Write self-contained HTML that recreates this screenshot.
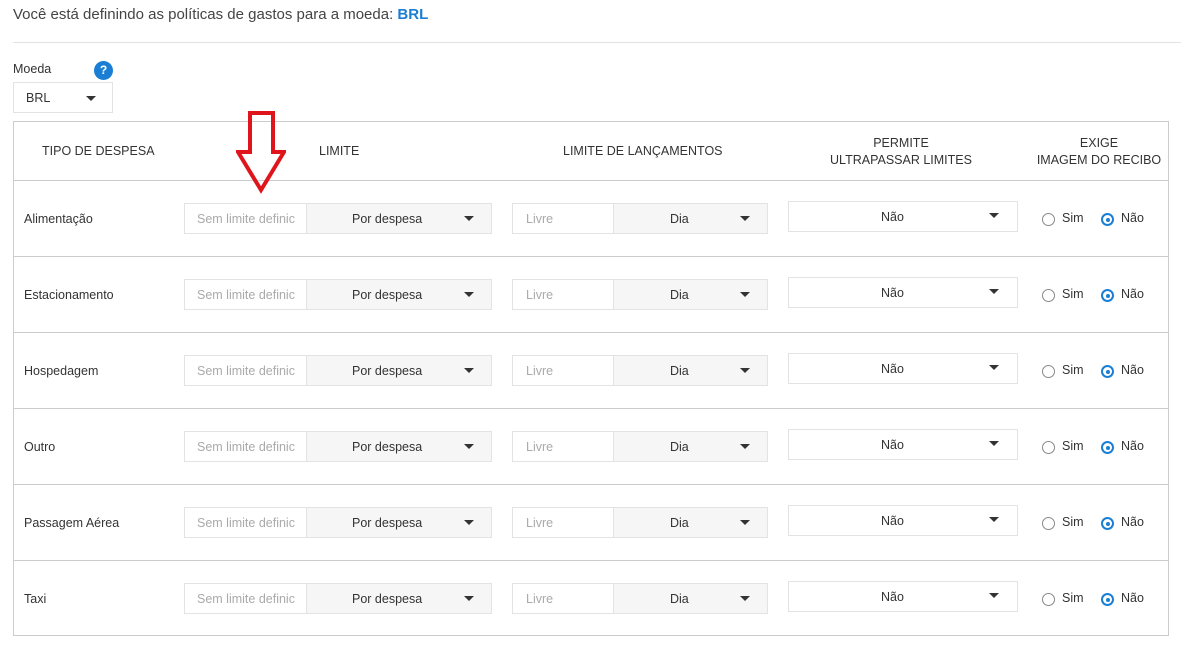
<!DOCTYPE html><html><head><style>
body{margin:0;width:1181px;height:649px;background:#fff;font-family:"Liberation Sans",sans-serif;position:relative;overflow:hidden;color:#333}
.a{position:absolute}
.t{font-size:12.5px;color:#333}
.box{position:absolute;box-sizing:border-box;border:1px solid #e3e3e3;background:#fff;font-size:12.5px}
.g{background:#f6f6f6}
.car{position:absolute;width:0;height:0;border-left:5px solid transparent;border-right:5px solid transparent;border-top:5px solid #333}
.hl{position:absolute;left:13px;width:1156px;height:1px;background:#ccc}
.rad{position:absolute;width:13px;height:13px;border-radius:50%;box-sizing:border-box}
</style></head><body>
<div class="a" style="left:13px;top:6px;font-size:15px;color:#444">Você está definindo as políticas de gastos para a moeda: <span style="color:#1a7fd4;font-weight:bold">BRL</span></div>
<div class="a" style="left:13px;top:42px;width:1168px;height:1px;background:#e2e2e2"></div>
<div class="a t" style="left:13px;top:62px">Moeda</div>
<div class="a" style="left:94px;top:61px;width:19px;height:19px;border-radius:50%;background:#1a7fd4;color:#fff;font-size:12px;font-weight:bold;text-align:center;line-height:19px">?</div>
<div class="box" style="left:13px;top:82px;width:100px;height:31px"><span class="a" style="left:12px;top:8px">BRL</span><div class="car" style="left:72px;top:13px"></div></div>
<div class="a" style="left:13px;top:121px;width:1156px;height:515px;border:1px solid #ccc;box-sizing:border-box"></div>
<div class="a t" style="left:42px;top:144px">TIPO DE DESPESA</div>
<div class="a t" style="left:319px;top:144px">LIMITE</div>
<div class="a t" style="left:563px;top:144px">LIMITE DE LANÇAMENTOS</div>
<div class="a t" style="left:800px;top:135px;width:202px;text-align:center;line-height:17px">PERMITE<br>ULTRAPASSAR LIMITES</div>
<div class="a t" style="left:1030px;top:135px;width:138px;text-align:center;line-height:17px">EXIGE<br>IMAGEM DO RECIBO</div>
<div class="hl" style="top:180px"></div>
<div id="rows"></div>
<svg class="a" style="left:236px;top:111px" width="50" height="84"><path d="M14 2 H37 V41 H48 L25 79 L2 41 H14 Z" fill="none" stroke="#e0151b" stroke-width="4"/></svg>
<script>
var n=["Alimentação","Estacionamento","Hospedagem","Outro","Passagem Aérea","Taxi"],h="";
n.forEach(function(s,i){var y=180+i*76,c=y+38;
h+='<div class="a t" style="left:24px;top:'+(c-6)+'px">'+s+'</div>'+
'<div class="box" style="left:184px;top:'+(c-15)+'px;width:123px;height:31px;color:#aaa"><span class="a" style="left:12px;top:8px">Sem limite definic</span></div>'+
'<div class="box g" style="left:306px;top:'+(c-15)+'px;width:186px;height:31px"><span class="a" style="left:45px;top:8px">Por despesa</span><div class="car" style="left:157px;top:12px"></div></div>'+
'<div class="box" style="left:512px;top:'+(c-15)+'px;width:102px;height:31px;color:#aaa"><span class="a" style="left:13px;top:8px">Livre</span></div>'+
'<div class="box g" style="left:613px;top:'+(c-15)+'px;width:155px;height:31px"><span class="a" style="left:56px;top:8px">Dia</span><div class="car" style="left:126px;top:12px"></div></div>'+
'<div class="box" style="left:788px;top:'+(c-17)+'px;width:230px;height:31px"><span class="a" style="left:92px;top:8px">Não</span><div class="car" style="left:200px;top:11px"></div></div>'+
'<div class="rad" style="left:1042px;top:'+(c-5)+'px;border:1.5px solid #888"></div><div class="a t" style="left:1062px;top:'+(c-7)+'px">Sim</div>'+
'<div class="rad" style="left:1101px;top:'+(c-5)+'px;border:2px solid #1a7fd4"><div class="a" style="left:2.5px;top:2.5px;width:4px;height:4px;border-radius:50%;background:#1a7fd4"></div></div><div class="a t" style="left:1121px;top:'+(c-7)+'px">Não</div>';
if(i<5)h+='<div class="hl" style="top:'+(y+76)+'px"></div>';});
document.getElementById("rows").innerHTML=h;
</script>
</body></html>
